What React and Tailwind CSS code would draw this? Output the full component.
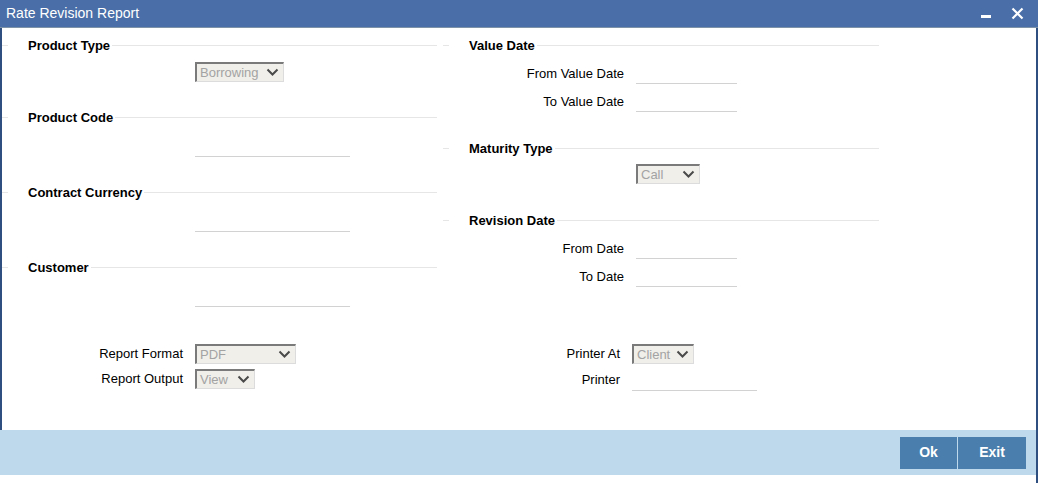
import React from "react";

const font = { fontFamily: '"Liberation Sans", Arial, sans-serif' };

const Legend = ({ title }) => (
  <div className="flex items-center h-[18px]">
    <div className="w-[6px] h-px bg-[#e6e6e6]" />
    <div className="w-[20px]" />
    <span className="text-[13px] font-bold text-black leading-none">{title}</span>
    <div className="flex-1 h-px bg-[#e6e6e6] ml-[2px]" />
  </div>
);

const Select = ({ value, width }) => (
  <div
    className={`flex items-center justify-between h-[20px] bg-[#f0efea] border-t-2 border-l-2 border-[#7a7a7a] border-b border-r border-b-[#dcdcdc] border-r-[#dcdcdc] pl-[3px] pr-[4px] ${width}`}
  >
    <span className="text-[13px] text-[#a3a3a3] leading-none">{value}</span>
    <svg width="13" height="9" viewBox="0 0 13 9">
      <path d="M1.5 1.5 L6.5 6.5 L11.5 1.5" fill="none" stroke="#4a4a4a" strokeWidth="2" />
    </svg>
  </div>
);

const Input = ({ width }) => (
  <div className={`h-[22px] border-b border-[#d2d2d2] ${width}`} />
);

const Row = ({ label, children, labelW }) => (
  <div className="flex items-center h-[22px]">
    <div className={`${labelW} text-right text-[13px] text-black pr-[12px] pt-[1px]`}>{label}</div>
    {children}
  </div>
);

export default function App() {
  return (
    <div style={font} className="w-[1038px] h-[483px] bg-white flex flex-col overflow-hidden">
      <div className="h-[28px] bg-[#4a6fa8] border-b border-[#7f93a8] flex items-center justify-between pl-[6px] pr-[14px] shrink-0">
        <span className="text-white text-[14px]">Rate Revision Report</span>
        <div className="flex items-center gap-[20px]">
          <div className="w-[10px] h-[3px] bg-white mt-[6px]" />
          <svg width="13" height="13" viewBox="0 0 13 13">
            <path d="M1.5 1.5 L11.5 11.5 M11.5 1.5 L1.5 11.5" stroke="white" strokeWidth="2.2" />
          </svg>
        </div>
      </div>

      <div className="flex-1 flex flex-col border-l-2 border-r-2 border-[#2f4f80]">
        <div className="flex pt-[8px]">
          <div className="w-[435px]">
            <Legend title="Product Type" />
            <div className="ml-[193px] mt-[8px]">
              <Select value="Borrowing" width="w-[89px]" />
            </div>
            <div className="mt-[26px]">
              <Legend title="Product Code" />
            </div>
            <div className="ml-[193px] mt-[9px]">
              <Input width="w-[155px]" />
            </div>
            <div className="mt-[26px]">
              <Legend title="Contract Currency" />
            </div>
            <div className="ml-[193px] mt-[9px]">
              <Input width="w-[155px]" />
            </div>
            <div className="mt-[26px]">
              <Legend title="Customer" />
            </div>
            <div className="ml-[193px] mt-[9px]">
              <Input width="w-[155px]" />
            </div>
          </div>

          <div className="w-[436px] ml-[6px]">
            <Legend title="Value Date" />
            <div className="mt-[8px]">
              <Row label="From Value Date" labelW="w-[193px]">
                <Input width="w-[101px]" />
              </Row>
            </div>
            <div className="mt-[6px]">
              <Row label="To Value Date" labelW="w-[193px]">
                <Input width="w-[101px]" />
              </Row>
            </div>
            <div className="mt-[27px]">
              <Legend title="Maturity Type" />
            </div>
            <div className="ml-[193px] mt-[7px]">
              <Select value="Call" width="w-[64px]" />
            </div>
            <div className="mt-[27px]">
              <Legend title="Revision Date" />
            </div>
            <div className="mt-[8px]">
              <Row label="From Date" labelW="w-[193px]">
                <Input width="w-[101px]" />
              </Row>
            </div>
            <div className="mt-[6px]">
              <Row label="To Date" labelW="w-[193px]">
                <Input width="w-[101px]" />
              </Row>
            </div>
          </div>
        </div>

        <div className="flex mt-[37px]">
          <div className="w-[440px] flex flex-col gap-[5px]">
            <div className="flex items-center">
              <div className="w-[193px] text-right pr-[12px] text-[13px]">Report Format</div>
              <Select value="PDF" width="w-[101px]" />
            </div>
            <div className="flex items-center">
              <div className="w-[193px] text-right pr-[12px] text-[13px]">Report Output</div>
              <Select value="View" width="w-[60px]" />
            </div>
          </div>
          <div className="flex flex-col gap-[5px]">
            <div className="flex items-center">
              <div className="w-[190px] text-right pr-[12px] text-[13px]">Printer At</div>
              <Select value="Client" width="w-[62px]" />
            </div>
            <div className="flex items-center">
              <div className="w-[190px] text-right pr-[12px] text-[13px]">Printer</div>
              <div className="w-[125px] h-[22px] border-b border-[#d2d2d2] flex items-center" />
            </div>
          </div>
        </div>
      </div>

      <div className="h-[45px] bg-[#bed8ec] border-r-2 border-[#2f4f80] flex items-center justify-end pr-[10px] shrink-0">
        <div className="flex gap-px">
          <div className="w-[57px] h-[32px] bg-[#4a7fad] text-white font-bold text-[14px] flex items-center justify-center">Ok</div>
          <div className="w-[68px] h-[32px] bg-[#4a7fad] text-white font-bold text-[14px] flex items-center justify-center">Exit</div>
        </div>
      </div>
      <div className="h-[8px] bg-white border-r-2 border-[#2f4f80] shrink-0" />
    </div>
  );
}
